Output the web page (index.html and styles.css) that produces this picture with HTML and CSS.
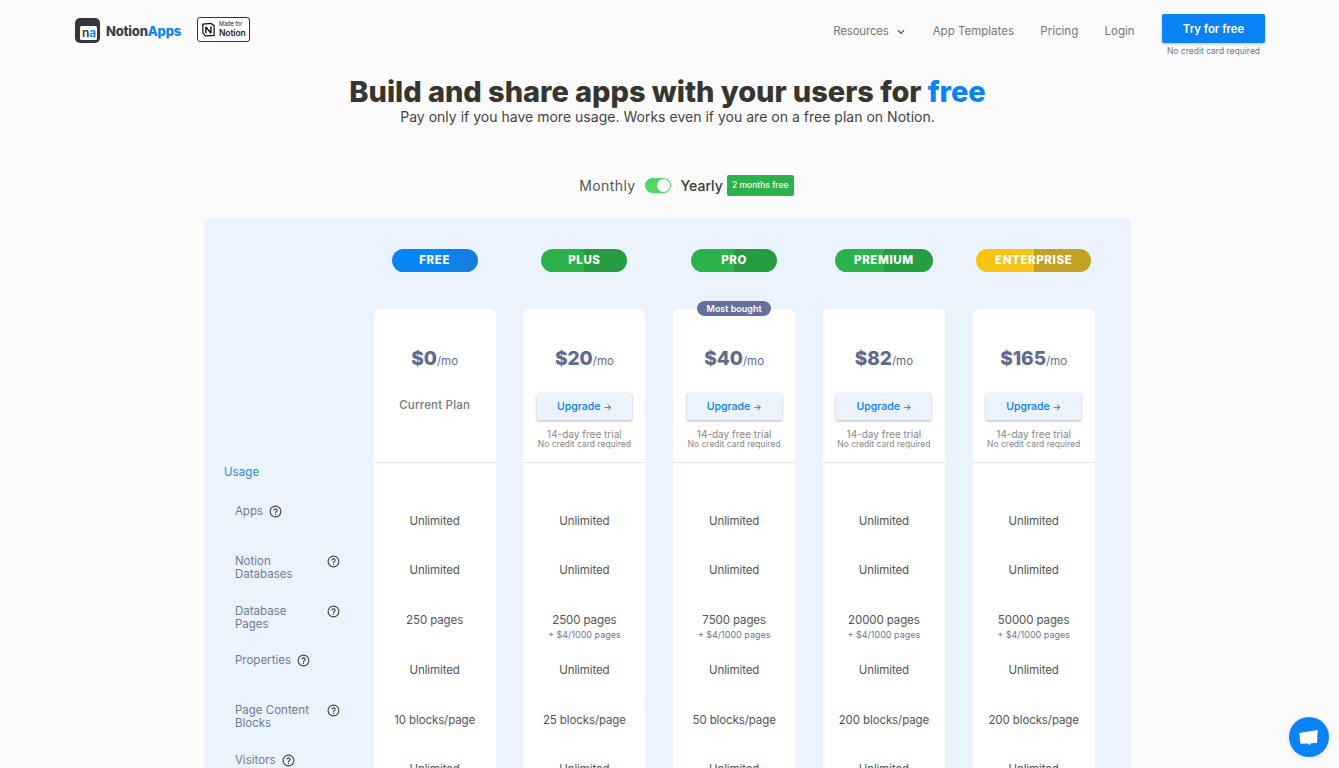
FILE: index.html
```html
<!DOCTYPE html>
<html lang="en">
<head>
<meta charset="utf-8">
<title>NotionApps Pricing</title>
<link rel="stylesheet" href="styles.css">
</head>
<body>
<div class="page">
  <header class="top">
    <div class="brand">
      <svg class="logo" viewBox="0 0 25 25" width="25" height="25"><rect width="25" height="25" rx="5" fill="#33363d"/><rect x="5" y="8" width="17" height="14" rx="1.5" fill="#fff"/></svg>
      <span class="logo-na"><b class="n">n</b><b class="a">a</b></span>
      <span class="word">Notion<em>Apps</em></span>
      <div class="made">
        <svg viewBox="0 0 16 16" width="15" height="15"><path d="M2 2.2 10.6 1.5 14 3.9V14.2L4.6 14.8 2 11.6Z" fill="#fff" stroke="#111" stroke-width="1.3"/><path d="M5.2 5.2V12M5.2 5.2 10.6 12M10.6 4.8V12" fill="none" stroke="#111" stroke-width="1.5"/></svg>
        <span class="made-text"><small>Made for</small><strong>Notion</strong></span>
      </div>
    </div>
    <nav class="nav">
      <a class="nav-link res">Resources <svg viewBox="0 0 8 6" width="8" height="6"><path d="M1 1.2 4 4.2 7 1.2" fill="none" stroke="#666" stroke-width="1.4"/></svg></a>
      <a class="nav-link">App Templates</a>
      <a class="nav-link">Pricing</a>
      <a class="nav-link">Login</a>
      <div class="cta">
        <button class="try">Try for free</button>
        <span class="cta-note">No credit card required</span>
      </div>
    </nav>
  </header>

  <section class="hero">
    <h1>Build and share apps with your users for <span>free</span></h1>
    <p>Pay only if you have more usage. Works even if you are on a free plan on Notion.</p>
  </section>

  <div class="billing">
    <span class="monthly">Monthly</span>
    <span class="toggle"><i></i></span>
    <span class="yearly">Yearly</span>
    <span class="free-tag">2 months free</span>
  </div>

  <section class="panel">
    <div class="col labels">
      <div class="pill-slot"></div>
      <div class="usage">Usage</div>
      <div class="label"><span>Apps</span><svg class="help" viewBox="0 0 14 14"><circle cx="7" cy="7" r="5.8"/><path d="M5.3 5.4A1.8 1.8 0 0 1 8.8 5.8C8.8 7 7 7.2 7 8.3"/><path d="M7 10V10.2"/></svg></div>
      <div class="label wide"><span>Notion Databases</span><svg class="help" viewBox="0 0 14 14"><circle cx="7" cy="7" r="5.8"/><path d="M5.3 5.4A1.8 1.8 0 0 1 8.8 5.8C8.8 7 7 7.2 7 8.3"/><path d="M7 10V10.2"/></svg></div>
      <div class="label wide"><span>Database Pages</span><svg class="help" viewBox="0 0 14 14"><circle cx="7" cy="7" r="5.8"/><path d="M5.3 5.4A1.8 1.8 0 0 1 8.8 5.8C8.8 7 7 7.2 7 8.3"/><path d="M7 10V10.2"/></svg></div>
      <div class="label"><span>Properties</span><svg class="help" viewBox="0 0 14 14"><circle cx="7" cy="7" r="5.8"/><path d="M5.3 5.4A1.8 1.8 0 0 1 8.8 5.8C8.8 7 7 7.2 7 8.3"/><path d="M7 10V10.2"/></svg></div>
      <div class="label wide"><span>Page Content Blocks</span><svg class="help" viewBox="0 0 14 14"><circle cx="7" cy="7" r="5.8"/><path d="M5.3 5.4A1.8 1.8 0 0 1 8.8 5.8C8.8 7 7 7.2 7 8.3"/><path d="M7 10V10.2"/></svg></div>
      <div class="label"><span>Visitors</span><svg class="help" viewBox="0 0 14 14"><circle cx="7" cy="7" r="5.8"/><path d="M5.3 5.4A1.8 1.8 0 0 1 8.8 5.8C8.8 7 7 7.2 7 8.3"/><path d="M7 10V10.2"/></svg></div>
    </div>

    <div class="col">
      <div class="pill-slot"><span class="pill blue">FREE</span></div>
      <div class="card">
        <div class="card-top">
          <div class="price">$0<small>/mo</small></div>
          <div class="current">Current Plan</div>
        </div>
        <div class="rows">
          <div class="val">Unlimited</div>
          <div class="val">Unlimited</div>
          <div class="val">250 pages</div>
          <div class="val">Unlimited</div>
          <div class="val">10 blocks/page</div>
          <div class="val">Unlimited</div>
        </div>
      </div>
    </div>

    <div class="col">
      <div class="pill-slot"><span class="pill green">PLUS</span></div>
      <div class="card">
        <div class="card-top">
          <div class="price">$20<small>/mo</small></div>
          <button class="upgrade">Upgrade <span class="arrow">→</span></button>
          <div class="trial">14-day free trial</div>
          <div class="nocard">No credit card required</div>
        </div>
        <div class="rows">
          <div class="val">Unlimited</div>
          <div class="val">Unlimited</div>
          <div class="val">2500 pages<small>+ $4/1000 pages</small></div>
          <div class="val">Unlimited</div>
          <div class="val">25 blocks/page</div>
          <div class="val">Unlimited</div>
        </div>
      </div>
    </div>

    <div class="col">
      <div class="pill-slot"><span class="pill green">PRO</span></div>
      <div class="card">
        <span class="bought">Most bought</span>
        <div class="card-top">
          <div class="price">$40<small>/mo</small></div>
          <button class="upgrade">Upgrade <span class="arrow">→</span></button>
          <div class="trial">14-day free trial</div>
          <div class="nocard">No credit card required</div>
        </div>
        <div class="rows">
          <div class="val">Unlimited</div>
          <div class="val">Unlimited</div>
          <div class="val">7500 pages<small>+ $4/1000 pages</small></div>
          <div class="val">Unlimited</div>
          <div class="val">50 blocks/page</div>
          <div class="val">Unlimited</div>
        </div>
      </div>
    </div>

    <div class="col">
      <div class="pill-slot"><span class="pill green premium">PREMIUM</span></div>
      <div class="card">
        <div class="card-top">
          <div class="price">$82<small>/mo</small></div>
          <button class="upgrade">Upgrade <span class="arrow">→</span></button>
          <div class="trial">14-day free trial</div>
          <div class="nocard">No credit card required</div>
        </div>
        <div class="rows">
          <div class="val">Unlimited</div>
          <div class="val">Unlimited</div>
          <div class="val">20000 pages<small>+ $4/1000 pages</small></div>
          <div class="val">Unlimited</div>
          <div class="val">200 blocks/page</div>
          <div class="val">Unlimited</div>
        </div>
      </div>
    </div>

    <div class="col">
      <div class="pill-slot"><span class="pill gold">ENTERPRISE</span></div>
      <div class="card">
        <div class="card-top">
          <div class="price">$165<small>/mo</small></div>
          <button class="upgrade">Upgrade <span class="arrow">→</span></button>
          <div class="trial">14-day free trial</div>
          <div class="nocard">No credit card required</div>
        </div>
        <div class="rows">
          <div class="val">Unlimited</div>
          <div class="val">Unlimited</div>
          <div class="val">50000 pages<small>+ $4/1000 pages</small></div>
          <div class="val">Unlimited</div>
          <div class="val">200 blocks/page</div>
          <div class="val">Unlimited</div>
        </div>
      </div>
    </div>
  </section>
</div>
<button class="chat" aria-label="Chat">
  <svg viewBox="0 0 20 20" width="20" height="20"><path d="M.3 6 18.7 3 18 16 12 16.3 10.5 18.6 9 16.5 1.5 16.7Z" fill="#fff"/></svg>
</button>
</body>
</html>
```

FILE: styles.css
```css
* { box-sizing: border-box; }
html, body { margin: 0; height: 768px; overflow: hidden; }
body { background: #fbfbfb; font-family: Inter, "Noto Sans", sans-serif; color: #444; }
.page { width: 1335px; }

.top { display: flex; justify-content: space-between; padding: 14px 70px 0 75px; height: 66px; }
.brand { display: flex; align-items: center; height: 31px; position: relative; }
.logo { display: block; margin-top: 2px; }
.logo-na { position: absolute; left: 7px; top: 12px; font-size: 12px; line-height: 14px; letter-spacing: 0; }
.logo-na b { font-weight: 600; }
.logo-na .n { color: #33363d; }
.logo-na .a { color: #0a84f5; }
.word { margin-left: 6px; font-size: 13px; font-weight: 800; color: #3a4150; letter-spacing: -0.2px; margin-top: 2px; }
.word em { font-style: normal; color: #0a84f5; }
.made { display: flex; align-items: center; gap: 3px; width: 53px; height: 25px; margin-left: 16px; border: 1.5px solid #333; border-radius: 3px; background: #fff; padding-left: 3px; }
.made-text { display: flex; flex-direction: column; line-height: 1; color: #222; }
.made-text small { font-size: 5.5px; margin-bottom: 1px; }
.made-text strong { font-size: 8.5px; font-weight: 600; letter-spacing: -0.1px; }

.nav { display: flex; align-items: flex-start; }
.nav-link { font-size: 11.5px; line-height: 16px; color: #777; margin-top: 9px; margin-right: 26.4px; letter-spacing: 0; white-space: nowrap; }
.nav-link.res svg { margin-left: 5px; }
.nav-link.res { margin-right: 28px; letter-spacing: -.2px; }
.cta { display: flex; flex-direction: column; align-items: center; width: 103px; margin-left: 1px; }
.try { width: 103px; height: 29px; border: 0; border-radius: 2px; background: #0a84f5; color: #fff; font: 600 11.3px Inter, sans-serif; box-shadow: 0 1px 3px rgba(0,0,0,.25); }
.cta-note { font-size: 8.5px; line-height: 12px; margin-top: 2px; color: #777; white-space: nowrap; }

.hero { text-align: center; margin-top: 9px; }
.hero h1 { margin: 0; font-size: 29px; line-height: 34px; font-weight: 800; color: #37352f; letter-spacing: -0.05px; }
.hero h1 span { color: #0a84f5; }
.hero p { margin: 0; font-size: 14px; line-height: 16px; color: #444; letter-spacing: 0.015px; }

.billing { display: flex; align-items: center; justify-content: center; margin-top: 50px; height: 20px; padding-left: 38px; }
.monthly { font-size: 14px; color: #555; letter-spacing: .4px; }
.toggle { display: block; width: 26px; height: 15px; border-radius: 8px; background: #4fd764; margin: 0 10px 0 9px; padding: 1px; }
.toggle i { display: block; width: 13px; height: 13px; border-radius: 50%; background: #fff; margin-left: 11px; }
.yearly { font-size: 14px; font-weight: 500; color: #3a3a3a; }
.free-tag { background: #2bb24a; color: #fff; font-size: 8.5px; font-weight: 500; line-height: 21px; height: 21px; width: 67px; text-align: center; border-radius: 2px; margin-left: 4px; }

.panel { width: 927px; margin: 23px auto 0; background: #eaf3fe; border-radius: 6px 6px 0 0; padding: 0 36px 0 19.9px; display: grid; grid-template-columns: repeat(6, 122px); column-gap: 27.75px; height: 800px; }
.col { display: flex; flex-direction: column; min-width: 0; }
.pill-slot { height: 91px; padding-top: 30px; text-align: center; flex: none; }
.pill { display: inline-block; width: 86px; height: 23px; line-height: 22px; border-radius: 12px; color: #fff; font-size: 11.5px; font-weight: 800; letter-spacing: .6px; }
.pill.blue { background: linear-gradient(90deg, #0785f5 50%, #1a7cdc 100%); }
.pill.green { background: linear-gradient(90deg, #2bb24a 50%, #259c40 50%); }
.pill.premium { width: 98px; margin: 0 -4px; }
.pill.gold { width: 115px; margin: 0 -8px; background: linear-gradient(90deg, #f6c315 50%, #c4a023 50%); }

.card { position: relative; background: #fff; border-radius: 6px 6px 0 0; flex: 1; }
.card-top { height: 154px; border-bottom: 1px solid #e6e8ec; padding-top: 38px; text-align: center; }
.bought { position: absolute; top: -8px; left: 24px; width: 74px; height: 15px; border-radius: 8px; background: #667199; color: #fff; font-size: 9px; font-weight: 600; line-height: 15px; text-align: center; }
.price { font-size: 19px; line-height: 24px; font-weight: 800; color: #5f6b8f; }
.price small { font-size: 11.5px; font-weight: 400; color: #5f6b8f; }
.current { margin-top: 25px; font-size: 11.5px; line-height: 15px; font-weight: 500; color: #777; letter-spacing: .2px; }
.upgrade { display: block; width: 95px; height: 27px; margin: 20px auto 0; border: 0; border-radius: 2px; background: #eaf3fe; color: #0a7cf0; font: 500 10.5px Inter, sans-serif; box-shadow: 0 1px 3px rgba(0,0,0,.3); padding: 0; }
.arrow { font-size: 9px; }
.trial { margin-top: 8.5px; font-size: 10px; line-height: 10px; color: #888; }
.nocard { font-size: 8.5px; line-height: 10px; color: #888; }

.rows { padding-top: 33.8px; }
.val { height: 49.7px; text-align: center; font-size: 11.5px; line-height: 49.7px; color: #555; position: relative; white-space: nowrap; letter-spacing: -.1px; }
.val small { position: absolute; left: 0; right: 0; top: 33px; font-size: 9px; line-height: 11px; color: #6d7899; letter-spacing: 0; }

.usage { padding-top: 155.3px; padding-bottom: 25px; font-size: 11.5px; line-height: 16px; color: #2f8ae8; letter-spacing: .1px; }
.label { display: flex; align-items: flex-start; height: 49.7px; padding-left: 11px; font-size: 11.5px; line-height: 13px; color: #6f7c9a; gap: 6px; letter-spacing: .02px; }
.label.wide { justify-content: space-between; padding-right: 6px; }
.label.wide span { width: 80px; }
.label .help { width: 13px; height: 13px; flex: none; fill: none; stroke: #444; stroke-width: 1.2; stroke-linecap: round; }

.chat { position: fixed; left: 1289px; top: 717px; width: 40px; height: 40px; border: 0; padding: 0; border-radius: 50%; background: #0a84f5; display: flex; align-items: center; justify-content: center; box-shadow: 0 1px 6px rgba(0,0,0,.12); }
```
